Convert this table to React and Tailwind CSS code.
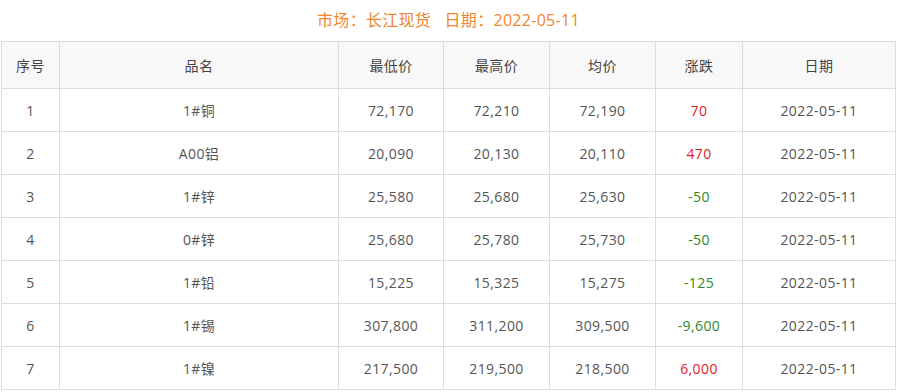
const rows = [
  ['1', '1#铜', '72,170', '72,210', '72,190', '70', '2022-05-11'],
  ['2', 'A00铝', '20,090', '20,130', '20,110', '470', '2022-05-11'],
  ['3', '1#锌', '25,580', '25,680', '25,630', '-50', '2022-05-11'],
  ['4', '0#锌', '25,680', '25,780', '25,730', '-50', '2022-05-11'],
  ['5', '1#铅', '15,225', '15,325', '15,275', '-125', '2022-05-11'],
  ['6', '1#锡', '307,800', '311,200', '309,500', '-9,600', '2022-05-11'],
  ['7', '1#镍', '217,500', '219,500', '218,500', '6,000', '2022-05-11'],
];

const heads = ['序号', '品名', '最低价', '最高价', '均价', '涨跌', '日期'];
const widths = ['w-[58px]', 'w-[279px]', 'w-[105px]', 'w-[106px]', 'w-[106px]', 'w-[87px]', 'w-[153px]'];

export default function App() {
  return (
    <div className="w-[897px] h-[392px] overflow-hidden bg-white font-['Open_Sans','Noto_Sans_CJK_SC',sans-serif] text-[14px] text-[#555]">
      <div className="h-[41px] pt-[8px] text-center text-[16px] leading-[24px] tracking-[0.3px] text-[#f0862d]">
        市场：长江现货&nbsp;&nbsp;&nbsp;日期：2022-05-11
      </div>
      <table className="ml-px w-[895px] table-fixed border-collapse tracking-[0.4px]">
        <colgroup>
          {widths.map((w, i) => (
            <col key={i} className={w} />
          ))}
        </colgroup>
        <thead>
          <tr className="h-[47px] bg-[#f8f8f8]">
            {heads.map((h) => (
              <th key={h} className="border border-[#dcdcdc] font-normal text-[#444]">
                {h}
              </th>
            ))}
          </tr>
        </thead>
        <tbody>
          {rows.map((r) => (
            <tr key={r[0]} className="h-[43px]">
              {r.map((c, i) => {
                let color = '';
                if (i === 5) color = c.startsWith('-') ? 'text-[#2b8a2b]' : 'text-[#e0202a]';
                return (
                  <td key={i} className={'border border-[#dcdcdc] text-center ' + color}>
                    {c}
                  </td>
                );
              })}
            </tr>
          ))}
        </tbody>
      </table>
    </div>
  );
}
